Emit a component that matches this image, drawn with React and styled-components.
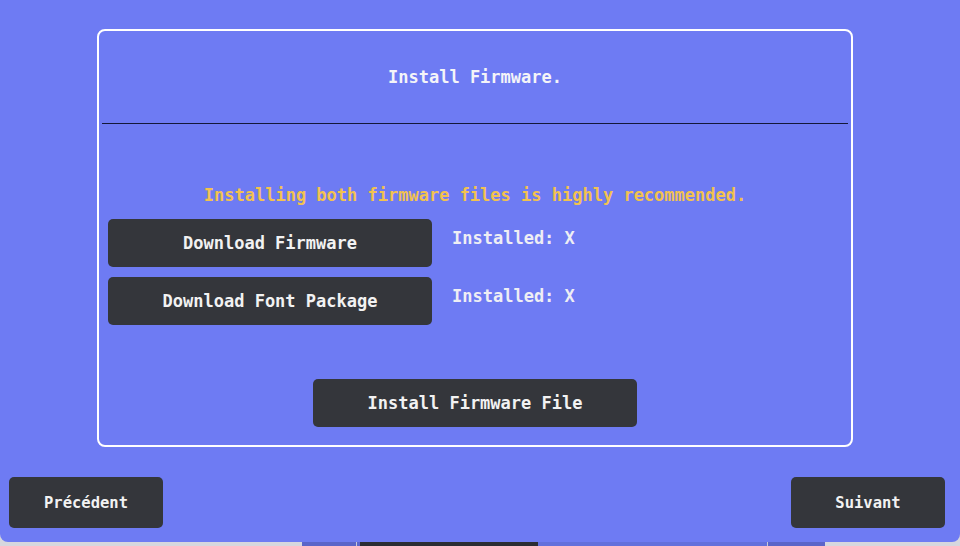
import React from "react";
import styled, { createGlobalStyle } from "styled-components";

const GlobalStyle = createGlobalStyle`
  html, body {
    margin: 0;
    padding: 0;
    background: #d6d7de;
    overflow: hidden;
  }
  body {
    font-family: "DejaVu Sans Mono", "Liberation Mono", monospace;
  }
`;

const Screen = styled.div`
  width: 960px;
  height: 542px;
  box-sizing: border-box;
  background: #6e7bf3;
  border-radius: 0 0 8px 8px;
  display: flex;
  flex-direction: column;
  padding-top: 29px;
`;

const Panel = styled.div`
  width: 756px;
  height: 418px;
  box-sizing: border-box;
  margin-left: 97px;
  border: 2px solid #ffffff;
  border-radius: 8px;
  display: flex;
  flex-direction: column;
`;

const Header = styled.div`
  height: 92px;
  display: flex;
  align-items: center;
  justify-content: center;
  color: #f4f4f8;
  font-weight: bold;
  font-size: 17px;
`;

const Divider = styled.div`
  height: 1px;
  margin: 0 3px;
  background: #141838;
`;

const Body = styled.div`
  flex: 1;
  display: flex;
  flex-direction: column;
  padding: 61px 9px 18px;
`;

const Notice = styled.div`
  text-align: center;
  color: #f2c24f;
  font-weight: bold;
  font-size: 17px;
  line-height: 20px;
  margin-bottom: 14px;
`;

const Rows = styled.div`
  display: flex;
  flex-direction: column;
  gap: 10px;
`;

const Row = styled.div`
  display: flex;
  align-items: flex-start;
  gap: 20px;
`;

const Button = styled.button`
  width: ${(p) => p.$w || 324}px;
  height: ${(p) => p.$h || 48}px;
  border: none;
  border-radius: 5px;
  background: #34363b;
  color: #f2f2f2;
  font-family: "DejaVu Sans Mono", "Liberation Mono", monospace;
  font-weight: bold;
  font-size: ${(p) => p.$fs || 17}px;
  padding: 0;
  cursor: pointer;
`;

const Status = styled.span`
  margin-top: 9px;
  line-height: 20px;
  color: #eeeef4;
  font-weight: bold;
  font-size: 17px;
`;

const InstallWrap = styled.div`
  margin-top: auto;
  display: flex;
  justify-content: center;
`;

const Nav = styled.div`
  margin-top: 30px;
  display: flex;
  justify-content: space-between;
  padding: 0 15px 0 9px;
`;

const Strip = styled.div`
  height: 4px;
  display: flex;
`;

const Seg = styled.div`
  width: ${(p) => p.$w}px;
  flex: ${(p) => (p.$grow ? 1 : "none")};
  background: ${(p) => p.$c};
`;

const segments = [
  { w: 302, c: "#d6d7de" },
  { w: 54, c: "#5b65c9" },
  { w: 1, c: "#c8c9d6" },
  { w: 3, c: "#5b65c9" },
  { w: 178, c: "#2b2d33" },
  { w: 229, c: "#6370dc" },
  { w: 1, c: "#c8c9d6" },
  { w: 57, c: "#5b65c9" },
  { grow: true, c: "#d6d7de" },
];

const downloads = ["Download Firmware", "Download Font Package"];

export default function App() {
  return (
    <>
      <GlobalStyle />
      <Screen>
        <Panel>
          <Header>Install Firmware.</Header>
          <Divider />
          <Body>
            <Notice>Installing both firmware files is highly recommended.</Notice>
            <Rows>
              {downloads.map((label) => (
                <Row key={label}>
                  <Button>{label}</Button>
                  <Status>Installed: X</Status>
                </Row>
              ))}
            </Rows>
            <InstallWrap>
              <Button>Install Firmware File</Button>
            </InstallWrap>
          </Body>
        </Panel>
        <Nav>
          <Button $w={154} $h={51} $fs={15.5}>Précédent</Button>
          <Button $w={154} $h={51} $fs={15.5}>Suivant</Button>
        </Nav>
      </Screen>
      <Strip>
        {segments.map((s, i) => (
          <Seg key={i} $w={s.w} $c={s.c} $grow={s.grow} />
        ))}
      </Strip>
    </>
  );
}
